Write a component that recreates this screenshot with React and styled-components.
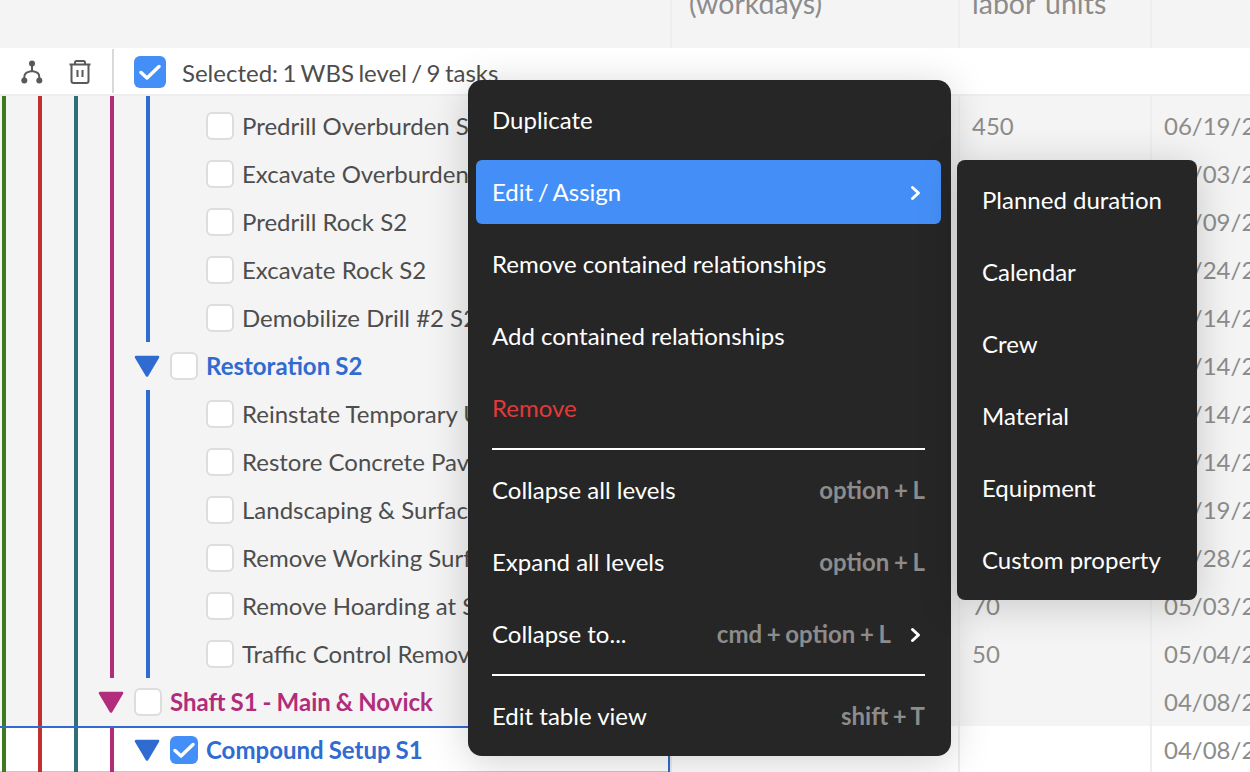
import React from "react";
import styled, { createGlobalStyle } from "styled-components";

const GlobalStyle = createGlobalStyle`
  html, body {
    margin: 0;
    padding: 0;
    background: #f4f4f4;
    font-family: "Lato", "Liberation Sans", sans-serif;
  }
  * { box-sizing: border-box; }
`;

const Page = styled.div`
  position: relative;
  width: 1250px;
  height: 772px;
  overflow: hidden;
  background: #f4f4f4;
  font-size: 24px;
  color: #4d4d4d;
`;

const ColumnHeader = styled.div`
  display: grid;
  grid-template-columns: 670px 288px 192px 100px;
  grid-template-rows: 48px;
  background: #f4f4f4;
`;

// the table is scrolled, so the header text sits half out of the window
const HeaderCell = styled.div`
  padding-left: ${(p) => p.$pad || 0}px;
  white-space: nowrap;
  color: #8c8c8c;
  font-size: 28.5px;
  word-spacing: 3px;
  line-height: 7px;
  border-left: ${(p) => (p.$plain ? "none" : "2px solid #eeeeee")};
`;

const Toolbar = styled.div`
  display: flex;
  align-items: center;
  height: 48px;
  padding-top: 2px;
  background: #fff;
  border-bottom: 2px solid #eeeeee;
`;

const ToolIcon = styled.svg`
  flex: none;
  width: 24px;
  height: 24px;
  margin-left: ${(p) => p.$gap}px;
  color: #595959;
`;

const ToolDivider = styled.div`
  width: 2px;
  height: 44px;
  margin: -2px 20px 0 20px;
  background: #d9d9d9;
`;

const SelectedLabel = styled.span`
  margin-left: 16px;
  white-space: nowrap;
  word-spacing: -1.7px;
`;

const CheckBox = styled.span`
  flex: none;
  display: flex;
  align-items: center;
  justify-content: center;
  width: ${(p) => p.$size || 28}px;
  height: ${(p) => p.$size || 28}px;
  border-radius: 6px;
  background: ${(p) => (p.$checked ? "#448ff7" : "#fff")};
  border: ${(p) => (p.$checked ? "none" : "2px solid #dddddd")};
`;

const CheckMark = styled.svg`
  width: 22px;
  height: 22px;
`;

const Row = styled.div`
  display: grid;
  grid-template-columns: 670px 288px 192px 100px;
  height: ${(p) => (p.$spacer ? 6 : 48)}px;
  background: ${(p) => (p.$active ? "#fff" : "#f4f4f4")};
`;

const TreeCell = styled.div`
  display: flex;
  align-items: center;
  height: 100%;
  white-space: nowrap;
  overflow: hidden;
  ${(p) =>
    p.$active &&
    `
    padding-bottom: 2px;
    border-top: 2px solid #2f6bd0;
    border-right: 2px solid #2f6bd0;
    box-shadow: inset 0 -3px 0 0 #b9cbe6;
  `}
`;

const Guide = styled.div`
  flex: none;
  align-self: stretch;
  width: 36px;
  padding-left: 2px;
  &::before {
    content: "";
    display: block;
    width: 4px;
    height: 100%;
    background: ${(p) => p.$color || "transparent"};
  }
`;

const Caret = styled.svg`
  flex: none;
  width: 26px;
  height: 24px;
  margin-left: -10px;
  margin-right: 10px;
`;

const TaskName = styled.span`
  margin-left: 8px;
  padding-bottom: 2px;
  color: ${(p) => p.$color || "#4d4d4d"};
  font-weight: ${(p) => (p.$bold ? 700 : 400)};
  word-spacing: ${(p) => (p.$bold ? -0.8 : 0)}px;
`;

const TaskIndent = styled.div`
  flex: none;
  width: 26px;
`;

const ValueCell = styled.div`
  display: flex;
  align-items: center;
  padding: 0 0 2px 12px;
  height: 100%;
  white-space: nowrap;
  color: #8c8c8c;
  border-left: 2px solid #eeeeee;
`;

const Menu = styled.div`
  position: absolute;
  left: ${(p) => p.$left}px;
  top: ${(p) => p.$top}px;
  width: ${(p) => p.$width}px;
  display: flex;
  flex-direction: column;
  gap: 8px;
  padding: 8px ${(p) => p.$padRight}px 8px 8px;
  border-radius: ${(p) => p.$radius}px;
  background: #262626;
  box-shadow: 0 6px 40px rgba(0, 0, 0, 0.18);
  color: #fff;
`;

const MenuItem = styled.div`
  display: flex;
  align-items: center;
  justify-content: space-between;
  height: 64px;
  padding: 0 16px 2px ${(p) => p.$inset || 16}px;
  border-radius: 6px;
  white-space: nowrap;
  word-spacing: ${(p) => (p.$active ? -1.5 : 0)}px;
  background: ${(p) => (p.$active ? "#448ff7" : "transparent")};
  color: ${(p) => (p.$danger ? "#e03a3a" : "#fff")};
`;

const MenuDivider = styled.div`
  height: 2px;
  margin: 0 16px;
  background: #fff;
`;

const Hint = styled.span`
  display: flex;
  align-items: center;
  gap: 18px;
  color: #8c8c8c;
  font-weight: 700;
  word-spacing: -1.2px;
`;

const Chevron = styled.svg`
  flex: none;
  width: 12px;
  height: 16px;
  margin: 4px 4px 0 0;
`;

const GUIDES = ["#3d7a22", "#c0302e", "#2f6f75", "#b22c7c", "#2f6bd0"];
const BLUE = "#2f6bd0";
const MAGENTA = "#b22c7c";

const tasks = [
  { name: "Predrill Overburden S2", labor: "450", date: "06/19/2023" },
  { name: "Excavate Overburden S2", date: "07/03/2023" },
  { name: "Predrill Rock S2", date: "07/09/2023" },
  { name: "Excavate Rock S2", date: "07/24/2023" },
  { name: "Demobilize Drill #2 S2", date: "08/14/2023" },
  { name: "Restoration S2", group: BLUE, depth: 4, date: "08/14/2023" },
  { name: "Reinstate Temporary Utilities", date: "08/14/2023" },
  { name: "Restore Concrete Pavement", date: "08/14/2023" },
  { name: "Landscaping & Surface Works", date: "08/19/2023" },
  { name: "Remove Working Surface", date: "08/28/2023" },
  { name: "Remove Hoarding at S2", labor: "70", date: "05/03/2023" },
  { name: "Traffic Control Removal", labor: "50", date: "05/04/2023" },
  { name: "Shaft S1 - Main & Novick", group: MAGENTA, depth: 3, date: "04/08/2023" },
  { name: "Compound Setup S1", group: BLUE, depth: 4, checked: true, active: true, date: "04/08/2023" },
];

const mainItems = [
  { label: "Duplicate" },
  { label: "Edit / Assign", active: true, arrow: true },
  { label: "Remove contained relationships" },
  { label: "Add contained relationships" },
  { label: "Remove", danger: true },
  { divider: true },
  { label: "Collapse all levels", hint: "option + L" },
  { label: "Expand all levels", hint: "option + L" },
  { label: "Collapse to...", hint: "cmd + option + L", arrow: true },
  { divider: true },
  { label: "Edit table view", hint: "shift + T" },
];

const subItems = ["Planned duration", "Calendar", "Crew", "Material", "Equipment", "Custom property"];

function Check() {
  return (
    <CheckMark viewBox="0 0 22 22" fill="none">
      <path
        d="M2 11.5 L8 17 L20 5.5"
        stroke="#fff"
        strokeWidth="3.4"
        strokeLinecap="round"
        strokeLinejoin="round"
      />
    </CheckMark>
  );
}

function ArrowRight() {
  return (
    <Chevron viewBox="0 0 12 16" fill="none">
      <path d="M3.5 2.5 L9.5 8 L3.5 13.5" stroke="#fff" strokeWidth="3" strokeLinecap="round" strokeLinejoin="round" />
    </Chevron>
  );
}

function Guides({ count }) {
  return GUIDES.slice(0, count).map((color) => <Guide key={color} $color={color} />);
}

function TaskRow({ task }) {
  const { group, depth } = task;
  return (
    <Row $active={task.active}>
      <TreeCell $active={task.active}>
        {group ? (
          <>
            <Guides count={depth} />
            <Caret viewBox="0 0 26 24">
              <path d="M2 3 H24 L13 21.5 Z" fill={group} stroke={group} strokeWidth="2.6" strokeLinejoin="round" />
            </Caret>
            <CheckBox $checked={task.checked}>{task.checked && <Check />}</CheckBox>
            <TaskName $color={group} $bold>
              {task.name}
            </TaskName>
          </>
        ) : (
          <>
            <Guides count={5} />
            <TaskIndent />
            <CheckBox />
            <TaskName>{task.name}</TaskName>
          </>
        )}
      </TreeCell>
      <ValueCell />
      <ValueCell>{task.labor}</ValueCell>
      <ValueCell>{task.date}</ValueCell>
    </Row>
  );
}

export default function App() {
  return (
    <Page>
      <GlobalStyle />
      <ColumnHeader>
        <HeaderCell $plain />
        <HeaderCell $pad={17}>(workdays)</HeaderCell>
        <HeaderCell $pad={12}>labor units</HeaderCell>
        <HeaderCell />
      </ColumnHeader>
      <Toolbar>
        <ToolIcon $gap={20} viewBox="0 0 24 24" fill="none" stroke="currentColor" strokeWidth="2">
          <circle cx="12" cy="3.5" r="3" fill="currentColor" stroke="none" />
          <circle cx="4.3" cy="20.5" r="3" fill="currentColor" stroke="none" />
          <circle cx="19.3" cy="20.5" r="3" fill="currentColor" stroke="none" />
          <path d="M12 4 V11 M4.3 20 V17 C4.3 13 7 12 12 11 C17 12 19.3 13 19.3 17 V20" />
        </ToolIcon>
        <ToolIcon $gap={24} viewBox="0 0 24 24" fill="none" stroke="currentColor" strokeWidth="2">
          <path d="M1.5 4.5 H22.5 M7 4 V2.5 C7 1.5 7.5 1 8.5 1 H15.5 C16.5 1 17 1.5 17 2.5 V4" />
          <path d="M3.5 5 V21 C3.5 22.2 4.3 23 5.5 23 H18.5 C19.7 23 20.5 22.2 20.5 21 V5" />
          <path d="M9.5 10 V17 M14.5 10 V17" />
        </ToolIcon>
        <ToolDivider />
        <CheckBox $checked $size={32}>
          <Check />
        </CheckBox>
        <SelectedLabel>Selected: 1 WBS level / 9 tasks</SelectedLabel>
      </Toolbar>
      <Row $spacer>
        <TreeCell>
          <Guides count={5} />
        </TreeCell>
        <ValueCell />
        <ValueCell />
        <ValueCell />
      </Row>
      {tasks.map((task) => (
        <TaskRow key={task.name} task={task} />
      ))}

      <Menu $left={468} $top={80} $width={483} $radius={14} $padRight={10}>
        {mainItems.map((item, i) =>
          item.divider ? (
            <MenuDivider key={i} />
          ) : (
            <MenuItem key={item.label} $active={item.active} $danger={item.danger}>
              {item.label}
              {(item.hint || item.arrow) && (
                <Hint>
                  {item.hint}
                  {item.arrow && <ArrowRight />}
                </Hint>
              )}
            </MenuItem>
          )
        )}
      </Menu>
      <Menu $left={957} $top={160} $width={240} $radius={8} $padRight={8}>
        {subItems.map((label) => (
          <MenuItem key={label} $inset={17}>
            {label}
          </MenuItem>
        ))}
      </Menu>
    </Page>
  );
}
